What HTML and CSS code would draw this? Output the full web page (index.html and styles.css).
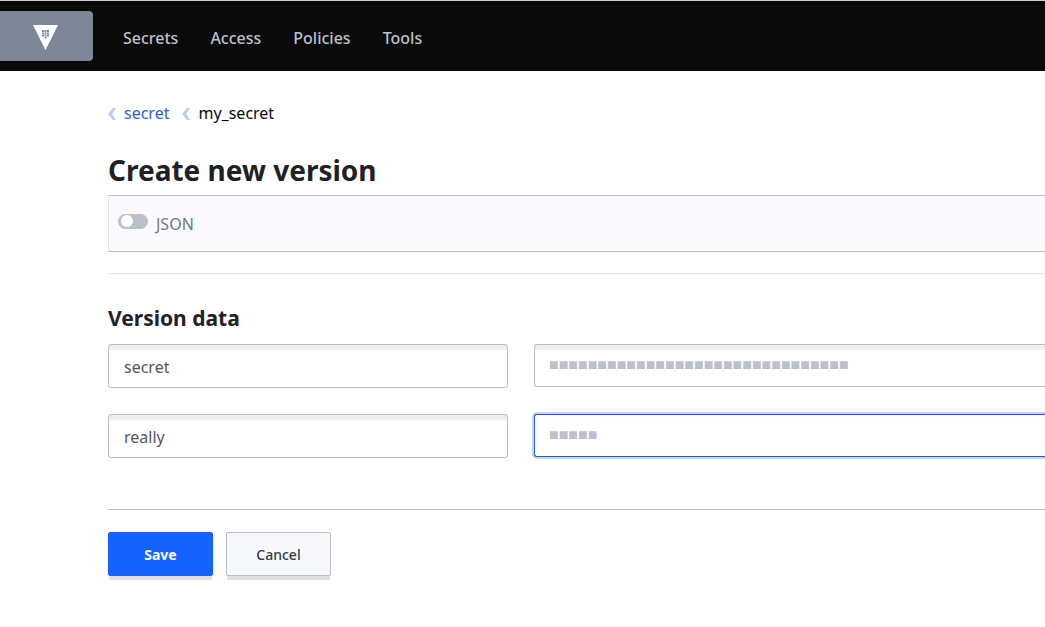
FILE: index.html
```html
<!DOCTYPE html>
<html lang="en">
<head>
<meta charset="utf-8">
<title>Create new version</title>
<link rel="stylesheet" href="styles.css">
</head>
<body>
<header class="topbar">
  <a class="brand" href="#" aria-label="Home">
    <svg width="25" height="25" viewBox="0 0 25 25" aria-hidden="true">
      <path fill="#fff" d="M0 0h25L12.500 25z"/>
      <path fill="#7d8797" d="M9 5h2v2H9zM11.500 5h2v2h-2zM14 5h2v2h-2zM9 7.500h2v2H9zM11.500 7.500h2v2h-2zM14 7.500h2v2h-2zM9 10h2v1.500H9zM11.500 10h2v1.500h-2zM14 10h2v1.500h-2zM11.500 12h2v1.500h-2z"/>
    </svg>
  </a>
  <nav class="nav">
    <a href="#">Secrets</a>
    <a href="#">Access</a>
    <a href="#">Policies</a>
    <a href="#">Tools</a>
  </nav>
</header>
<main class="page">
  <nav class="crumbs" aria-label="Breadcrumb">
    <a class="crumb" href="#"><svg class="chevron" width="8" height="14" viewBox="0 0 8 14" aria-hidden="true"><path d="M5 2h3L4 8l4 6H5L0 8z"/></svg>secret</a>
    <span class="crumb current"><svg class="chevron" width="8" height="14" viewBox="0 0 8 14" aria-hidden="true"><path d="M5 2h3L4 8l4 6H5L0 8z"/></svg>my_secret</span>
  </nav>
  <h1 class="title">Create new version</h1>
  <div class="toolbar">
    <input class="switch" type="checkbox" role="switch" id="json">
    <label class="switch-label" for="json">JSON</label>
  </div>
  <form class="form">
    <h2 class="subtitle">Version data</h2>
    <div class="rows">
      <div class="row">
        <input class="field" type="text" value="secret" aria-label="Key 1">
        <input class="field masked" type="text" value="■■■■■■■■■■■■■■■■■■■■■■■■■■■■■■■" aria-label="Value 1">
      </div>
      <div class="row">
        <input class="field" type="text" value="really" aria-label="Key 2">
        <input class="field masked active" type="text" value="■■■■■" aria-label="Value 2">
      </div>
    </div>
    <div class="actions">
      <button class="button primary" type="submit">Save</button>
      <button class="button" type="button">Cancel</button>
    </div>
  </form>
</main>
</body>
</html>
```
FILE: styles.css
```css
* { box-sizing: border-box; }
body {
  margin: 0;
  background: #fff;
  color: #1f2124;
  font-family: "Noto Sans", "Open Sans", sans-serif;
  font-size: 16px;
}
a { text-decoration: none; }
.topbar {
  display: flex;
  align-items: center;
  gap: 30px;
  height: 71px;
  border-top: 1px solid #c9cdcb;
  background: #0a0a0a;
}
.brand {
  display: flex;
  align-items: center;
  justify-content: center;
  width: 93px;
  height: 50px;
  padding: 3px 2px 0 0;
  border-radius: 0 4px 4px 0;
  background: #7d8797;
}
.nav { display: flex; gap: 32px; padding-top: 3px; }
.nav a {
  color: #bac1cc;
  font-weight: 500;
  line-height: 24px;
}
.page { padding: 30px 0 40px 108px; }
.crumbs { display: flex; gap: 13px; line-height: 24px; }
.crumb {
  display: flex;
  align-items: center;
  gap: 8px;
  color: #2a62d0;
}
.current { color: #0a0a0a; }
.chevron { fill: #b3cdfb; }
.title {
  margin: 25px 0 5px;
  font-size: 28px;
  line-height: 40px;
}
.toolbar {
  display: flex;
  align-items: center;
  gap: 8px;
  height: 57px;
  padding-left: 9px;
  border: solid #babdc4;
  border-width: 1px 0;
  border-left: 1px solid #e5e7ec;
  background: #fafafc;
}
.switch {
  appearance: none;
  width: 30px;
  height: 15px;
  margin: 0 0 4px;
  padding: 1px 3px;
  border-radius: 8px;
  background: #bac1cc;
}
.switch::before {
  content: "";
  display: block;
  width: 12px;
  height: 12px;
  border-radius: 50%;
  background: #fff;
}
.switch:checked::before { margin-left: auto; }
.switch-label { color: #72777f; font-size: 16px; }
.form {
  margin-top: 21px;
  border-top: 1px solid #e3e5e8;
}
.subtitle {
  margin: 28px 0 10px;
  font-size: 21px;
  line-height: 32px;
}
.rows {
  display: grid;
  gap: 26px;
  padding-bottom: 51px;
  border-bottom: 1px solid #babdc4;
}
.row {
  display: grid;
  grid-template-columns: 400px 1fr;
  gap: 26px;
}
.field {
  width: 100%;
  height: 44px;
  padding: 1px 15px 0;
  border: 1px solid #babdc2;
  border-radius: 3px;
  background: linear-gradient(#efeff0 4px, #fff 6px);
  color: #525761;
  font: inherit;
}
.masked {
  height: 43px;
  padding: 0 14px 2px;
  border-right: 0;
  border-radius: 3px 0 0 3px;
  color: #bac1cc;
  font-family: "Liberation Sans", sans-serif;
}
.active {
  border-color: #2a5cb8;
  background: #fff;
  box-shadow: 0 0 0 2px #bfd6fb;
}
.actions { display: flex; gap: 13px; padding-top: 23px; }
.rows + .actions { padding-top: 22px; }
.button {
  width: 105px;
  height: 44px;
  border: 1px solid #babdc8;
  border-radius: 2px;
  background: #f7f8fa;
  box-shadow: 0 5px 1px -1px #dfdfe2;
  color: #373a42;
  font: inherit;
  font-size: 14px;
  font-weight: 500;
}
.primary {
  border-color: #1563ff;
  background: #1563ff;
  color: #fff;
  font-weight: 700;
}
```
